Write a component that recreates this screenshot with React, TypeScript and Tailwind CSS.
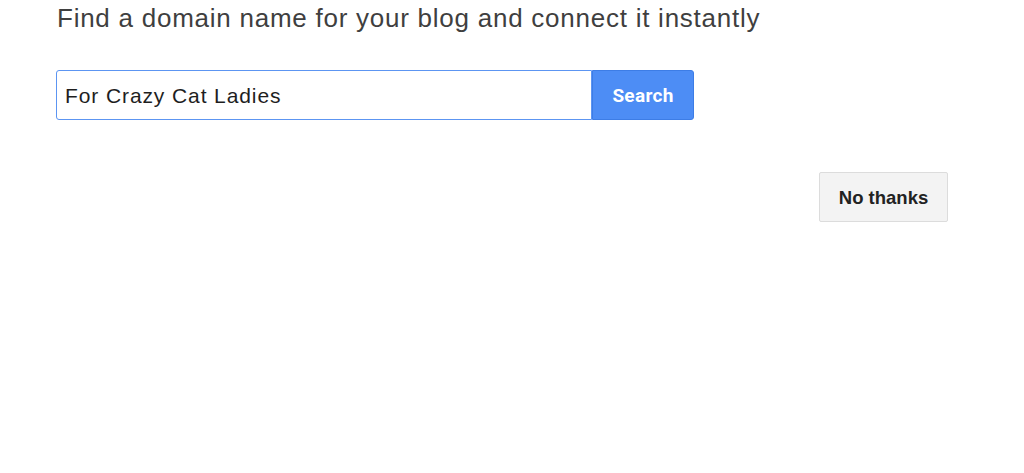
export default function App() {
  return (
    <div className="min-h-[473px] w-full bg-white font-['Liberation_Sans',Arial,sans-serif]">
      <div className="pl-[57px] pr-[76px] pt-[2px]">
        <h1 className="text-[26px] leading-[32px] tracking-[0.75px] text-[#3f3f3f]">
          Find a domain name for your blog and connect it instantly
        </h1>

        <form className="mt-[36px] flex h-[50px] w-[638px] -ml-px" onSubmit={e => e.preventDefault()}>
          <input
            type="text"
            defaultValue="For Crazy Cat Ladies"
            className="h-full flex-1 rounded-l-[3px] border border-[#5c95f2] bg-white px-2 pt-px text-[21px] tracking-[0.9px] text-[#1e1e1e] outline-none"
          />
          <button
            type="submit"
            className="h-full w-[102px] rounded-r-[3px] border border-[#3d7de6] bg-[#4d8df5] pt-[3px] font-['Roboto',Arial,sans-serif] text-[19px] font-bold tracking-[0.3px] text-white"
          >
            Search
          </button>
        </form>

        <div className="mt-[52px] flex justify-end">
          <button
            type="button"
            className="h-[50px] w-[129px] rounded-[2px] border border-[#dcdcdc] bg-[#f3f3f3] pt-px text-[18.5px] font-bold text-[#222]"
          >
            No thanks
          </button>
        </div>
      </div>
    </div>
  )
}
